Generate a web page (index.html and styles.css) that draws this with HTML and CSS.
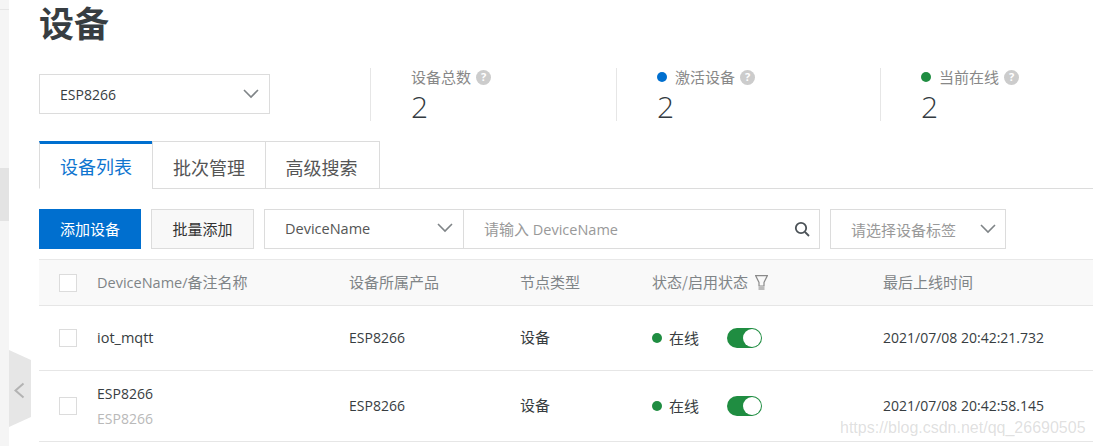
FILE: index.html
```html
<!DOCTYPE html>
<html lang="zh">
<head>
<meta charset="utf-8">
<title>设备</title>
<link rel="stylesheet" href="styles.css">
</head>
<body>
<div class="app">
  <aside class="rail">
    <div class="rail-active"></div>
    <div class="rail-handle">
      <svg width="22" height="78" viewBox="0 0 22 78"><path d="M0 0 L22 10 V67 L0 77 Z" fill="#e6e6e6"/><path d="M14.500 33.500 L6.500 40.500 L14.500 47.500" fill="none" stroke="#b3b3b3" stroke-width="2"/></svg>
    </div>
  </aside>
  <main class="main">
    <h1 class="title">设备</h1>
    <section class="summary">
      <div class="select product-select"><span>ESP8266</span><svg class="chev" viewBox="0 0 16 10"><path d="M1 1 L8 8 L15 1" /></svg></div>
      <div class="stat stat-total">
        <div class="stat-label">设备总数<span class="help">?</span></div>
        <div class="stat-num">2</div>
      </div>
      <div class="stat stat-active">
        <div class="stat-label"><i class="dot dot-blue"></i>激活设备<span class="help">?</span></div>
        <div class="stat-num">2</div>
      </div>
      <div class="stat stat-online">
        <div class="stat-label"><i class="dot dot-green"></i>当前在线<span class="help">?</span></div>
        <div class="stat-num">2</div>
      </div>
    </section>
    <nav class="tabs">
      <a class="tab tab-on">设备列表</a><a class="tab tab-2">批次管理</a><a class="tab tab-3">高级搜索</a>
    </nav>
    <section class="toolbar">
      <button class="btn btn-primary">添加设备</button>
      <button class="btn btn-plain">批量添加</button>
      <div class="search">
        <div class="search-field"><span>DeviceName</span><svg class="chev" viewBox="0 0 16 10"><path d="M1 1 L8 8 L15 1" /></svg></div>
        <div class="search-input"><span><span class="cjk">请输入</span> DeviceName</span>
          <svg class="magnify" viewBox="0 0 16 16"><circle cx="7" cy="7" r="5.200"/><path d="M11 11 L15 15"/></svg>
        </div>
      </div>
      <div class="select tag-select"><span>请选择设备标签</span><svg class="chev" viewBox="0 0 16 10"><path d="M1 1 L8 8 L15 1" /></svg></div>
    </section>
    <section class="table">
      <div class="row row-head">
        <div class="cell-check"><i class="check"></i></div>
        <div>DeviceName/<span class="cjk">备注名称</span></div>
        <div class="cjk">设备所属产品</div>
        <div class="cjk">节点类型</div>
        <div class="status-head"><span class="cjk">状态/启用状态</span><svg class="funnel" viewBox="0 0 13 15"><path d="M0.600 0.600 H12.400 L9 7.500 V11 H4 V7.500 Z"/><rect x="3.500" y="12" width="6" height="3" fill="#bbb" stroke="none"/></svg></div>
        <div class="cjk">最后上线时间</div>
      </div>
      <div class="row row-one">
        <div class="cell-check"><i class="check"></i></div>
        <div>iot_mqtt</div>
        <div class="num">ESP8266</div>
        <div class="cjk type-cell">设备</div>
        <div class="status"><i class="dot dot-green dot-small"></i><span class="status-text">在线</span><span class="switch"><b></b></span></div>
        <div class="num">2021/07/08 20:42:21.732</div>
      </div>
      <div class="row row-two">
        <div class="cell-check"><i class="check"></i></div>
        <div class="name-cell"><div class="num">ESP8266</div><div class="num alias">ESP8266</div></div>
        <div class="num">ESP8266</div>
        <div class="cjk type-cell">设备</div>
        <div class="status"><i class="dot dot-green dot-small"></i><span class="status-text">在线</span><span class="switch"><b></b></span></div>
        <div class="num">2021/07/08 20:42:58.145</div>
      </div>
    </section>
  </main>
</div>
<div class="watermark">https://blog.csdn.net/qq_26690505</div>
</body>
</html>
```
FILE: styles.css
```css
* { box-sizing: border-box; }
html, body { margin: 0; height: 100%; overflow: hidden; background: #fff; }
body { font-family: "Open Sans", "Noto Sans CJK SC", sans-serif; font-size: 14px; color: #373d41; }
.app { display: flex; width: 1093px; height: 446px; overflow: hidden; }
.cjk { font-size: 15px; font-family: "Noto Sans CJK SC", sans-serif; }
.num { font-size: 14px; }

.rail { position: relative; flex: 0 0 9px; background: #f5f5f5; }
.rail::before { content: ""; display: block; height: 9px; border-bottom: 1px solid #e6e6e6; }
.rail-active { margin-top: 158px; height: 53px; background: #e3e3e3; }
.rail-handle { position: absolute; left: 9px; top: 350px; width: 22px; height: 78px; }
.rail-handle svg { display: block; }

.main { flex: 1; min-width: 0; padding-left: 30px; }
.title { margin: 0; height: 62px; font-size: 35px; line-height: 50px; font-weight: 700; color: #373d41; font-family: "Liberation Sans", "Noto Sans CJK SC", sans-serif; }

.summary { display: flex; height: 79px; padding-top: 6px; }
.select { display: flex; align-items: center; justify-content: space-between; height: 40px; border: 1px solid #dcdcdc; background: #fff; }
.product-select { width: 231px; margin-top: 6px; padding: 0 10px 0 20px; }
.chev { width: 16px; height: 10px; fill: none; stroke: #7f8487; stroke-width: 1.6; flex: none; }
.stat { height: 53px; border-left: 1px solid #e6e6e6; }
.stat-total { margin-left: 100px; width: 246px; padding-left: 40px; }
.stat-active { width: 264px; padding-left: 40px; }
.stat-online { flex: 1; padding-left: 40px; }
.stat-label { display: flex; align-items: center; height: 18px; font-size: 15px; line-height: 18px; color: #888; font-family: "Noto Sans CJK SC", sans-serif; }
.help { display: inline-flex; align-items: center; justify-content: center; width: 15px; height: 15px; margin-left: 5px; border-radius: 50%; background: #ccc; color: #fff; font-size: 11px; font-weight: 700; font-family: "Open Sans", sans-serif; }
.dot { display: inline-block; width: 10px; height: 10px; border-radius: 50%; margin-right: 8px; }
.dot-blue { background: #006fcf; }
.dot-green { background: #1f8d41; }
.stat-num { margin-top: 5px; font-size: 30px; line-height: 32px; font-weight: 300; color: #333a40; font-family: "Open Sans", sans-serif; }

.tabs { display: flex; height: 48px; border-bottom: 1px solid #dcdcdc; }
.tab { display: flex; align-items: center; justify-content: center; height: 47px; padding-top: 3px; font-size: 18px; color: #555; border: 1px solid #dcdcdc; border-bottom: 0; border-left: 0; background: #fff; font-family: "Noto Sans CJK SC", sans-serif; }
.tab-on { width: 113px; color: #0f75cf; border-top: 3px solid #006fcf; border-left: 1px solid #dcdcdc; border-right: 0; height: 48px; border-bottom: 1px solid #fff; padding-top: 0; }
.tab-2 { width: 114px; border-left: 1px solid #dcdcdc; }
.tab-3 { width: 114px; padding-right: 2px; }

.toolbar { display: flex; gap: 10px; margin-top: 20px; height: 40px; }
.btn { height: 40px; font-size: 15px; border: 1px solid #dcdcdc; padding: 0 0 2px; font-family: "Noto Sans CJK SC", sans-serif; }
.btn-primary { width: 102px; background: #006fcf; border-color: #006fcf; color: #fff; }
.btn-plain { width: 103px; background: #f8f8f8; color: #333; }
.search { display: flex; width: 556px; height: 40px; border: 1px solid #dcdcdc; }
.search-field { display: flex; align-items: center; justify-content: space-between; flex: 0 0 199px; padding: 0 10px 2px 20px; border-right: 1px solid #dcdcdc; font-size: 14.500px; color: #555; }
.search-input { display: flex; align-items: center; justify-content: space-between; flex: 1; padding: 0 9px 2px 20px; color: #999; font-size: 14.500px; }
.magnify { width: 16px; height: 16px; margin-top: 2px; fill: none; stroke: #4b5257; stroke-width: 1.800; }
.tag-select { width: 176px; padding: 0 9px 0 20px; color: #999; font-size: 15px; font-family: "Noto Sans CJK SC", sans-serif; }

.table { margin-top: 10px; }
.row { display: grid; grid-template-columns: 58px 252px 171px 132px 231px 1fr; align-items: center; border-bottom: 1px solid #e6e6e6; font-size: 14.500px; color: #373d41; }
.row > div { padding-bottom: 2px; }
.row > .cell-check { padding: 0 0 0 20px; display: flex; }
.row > .status { padding-bottom: 0; }
.row > .name-cell { padding-bottom: 0; }
.row > .type-cell { padding-bottom: 4px; }
.row-head { height: 47px; background: #f9f9f9; border-top: 1px solid #e8e8e8; color: #7f8487; }
.row-one { height: 65px; }
.row-two { height: 71px; }
.check { display: block; width: 18px; height: 18px; border: 1px solid #dcdcdc; background: #fff; }
.name-cell { display: flex; flex-direction: column; gap: 6px; line-height: 19px; }
.alias { color: #b9b9b9; }
.status-head { display: flex; align-items: center; }
.funnel { width: 13px; height: 15px; margin: 2px 0 0 7px; fill: none; stroke: #8a8a8a; stroke-width: 1.200; }
.status { display: flex; align-items: center; }
.dot-small { margin-right: 7px; }
.status-text { width: 58px; padding-bottom: 2px; font-size: 15px; font-family: "Noto Sans CJK SC", sans-serif; }
.switch { display: block; width: 35px; height: 20px; padding: 1px; border-radius: 10px; background: #1f8d41; }
.switch b { display: block; width: 18px; height: 18px; margin-left: 15px; border-radius: 50%; background: #fff; }

.watermark { position: absolute; left: 840px; top: 418px; font-family: "Liberation Sans", sans-serif; font-size: 16px; line-height: 20px; color: rgba(150,150,150,0.3); white-space: nowrap; }
```
